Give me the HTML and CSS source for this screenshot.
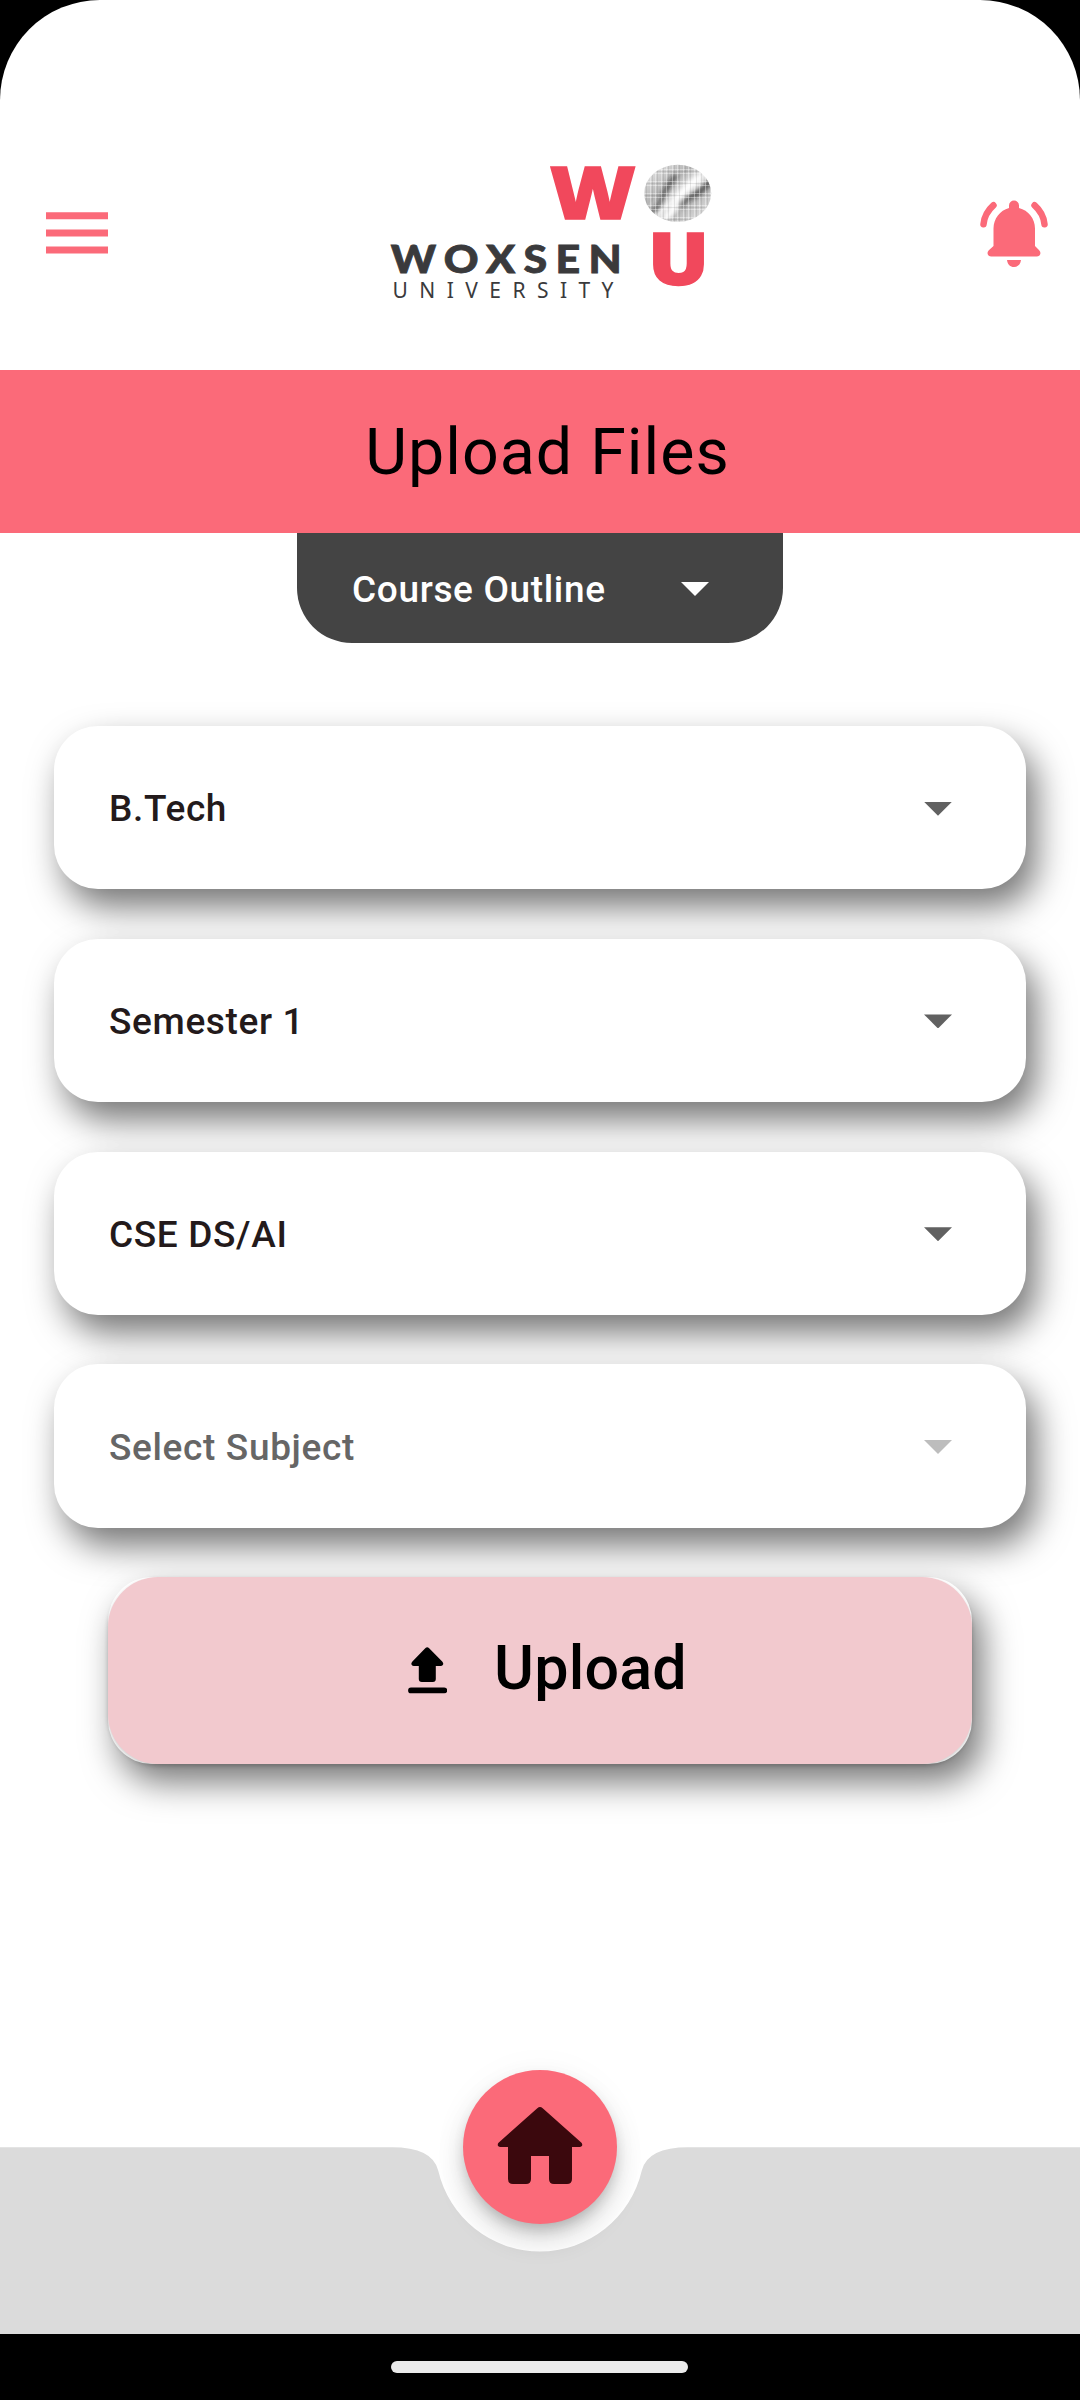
FILE: index.html
```html
<!DOCTYPE html>
<html lang="en">
<head>
<meta charset="utf-8">
<title>Upload Files</title>
<link rel="stylesheet" href="styles.css">
</head>
<body>
<div class="screen">
  <header class="header">
    <svg class="menu" viewBox="0 0 62 42" aria-label="Menu"><path d="M0 .3h62v7H0zM0 17.4h62v7H0zM0 34.5h62v7H0z"/></svg>
    <svg class="logo" viewBox="370 150 360 160" role="img" aria-label="Woxsen University">
      <defs>
        <clipPath id="globe"><ellipse cx="677.7" cy="193.3" rx="33.5" ry="28.5"/></clipPath>
        <linearGradient id="shade" x1="0" y1="0" x2="1" y2="1">
          <stop offset="0" stop-color="#f4f4f4"/><stop offset=".36" stop-color="#b4b4b4"/><stop offset=".52" stop-color="#eee"/><stop offset=".66" stop-color="#bbb"/><stop offset="1" stop-color="#f2f2f2"/>
        </linearGradient>
        <filter id="soft" x="-50%" y="-50%" width="200%" height="200%"><feGaussianBlur stdDeviation="2.2"/></filter>
        <pattern id="weave" width="11" height="12" patternUnits="userSpaceOnUse"><path d="M0 1.500h11M0 5.500h11M1.500 0v12M6.500 0v12" stroke="#fff" stroke-opacity=".5" stroke-width=".8"/><path d="M0 3.500h11M3.500 0v12M8.500 0v12" stroke="#444" stroke-opacity=".16" stroke-width=".8"/></pattern>
      </defs>
      <text class="mark" transform="translate(549.800 218.800) scale(1.186 1)" font-size="72.500" textLength="72.500" lengthAdjust="spacingAndGlyphs">W</text>
      <text class="mark" transform="translate(648 284.500)" font-size="72.500" textLength="61" lengthAdjust="spacingAndGlyphs">U</text>
      <g clip-path="url(#globe)">
        <path fill="url(#shade)" d="M643 164h70v60h-70z"/>
        <g filter="url(#soft)" fill="none" stroke="#222">
          <path d="M650 213c8-4 9-9 13-17s8-15 13-21" stroke-width="5" stroke-opacity=".6"/>
          <path d="M679 207c6-10 13-10 19-14s10-9 14-13" stroke-width="6" stroke-opacity=".65"/>
          <path d="M664 218c8-3 9-10 14-19s12-15 22-22" stroke="#fff" stroke-width="6"/>
        </g>
        <path fill="url(#weave)" d="M643 164h70v60h-70z"/>
      </g>
      <text class="name" transform="translate(390.800 272.600) scale(1.16 1)" textLength="199" lengthAdjust="spacing">WOXSEN</text>
      <text class="sub" x="392.500" y="298" textLength="221" lengthAdjust="spacing">UNIVERSITY</text>
    </svg>
    <svg class="bell" viewBox="980 200 68 68" aria-label="Notifications">
      <path d="M1009 208v-2.500a5 5 0 0 1 10 0v2.500c9.500 2.500 16 10.500 16 20.500v17.500l4.200 4.200c2.500 2.700 1 6.300-2.400 6.300h-45.600c-3.400 0-5-3.600-2.400-6.300l4.700-4.200V228.500c0-10 6.500-18 15.500-20.500zM1007 260h14c-.5 4.500-3.300 7-7 7s-6.500-2.500-7-7z"/>
      <path class="ring" d="M993.500 205.300q-9 8-10 19M1034.500 205.300q9 8 10 19"/>
    </svg>
  </header>

  <h1 class="title">Upload Files</h1>

  <div class="kind"><span>Course Outline</span><i class="caret"></i></div>

  <main class="form">
    <div class="field"><span>B.Tech</span><i class="caret"></i></div>
    <div class="field"><span>Semester 1</span><i class="caret"></i></div>
    <div class="field"><span>CSE DS/AI</span><i class="caret"></i></div>
    <div class="field disabled"><span>Select Subject</span><i class="caret"></i></div>
    <div class="upload-wrap">
      <button class="upload">
        <svg class="upload-icon" viewBox="408 1647 39 47"><path d="M425.500 1648q1.700-1.600 3.400 0l13.300 13.500c2 2.100 1 4.500-1.400 4.500h-5v13q0 3-3 3h-11q-3 0-3-3v-13h-5c-2.400 0-3.400-2.400-1.400-4.500zM411 1687.500h33.300a2.900 2.900 0 0 1 0 5.800H411a2.900 2.900 0 0 1 0-5.800z"/></svg>
        <span>Upload</span>
      </button>
    </div>
  </main>

  <nav class="bottom">
    <svg class="bar" viewBox="0 0 1080 187"><path d="M0 .2H391.500Q432.750.2 438.200 23.600A104.500 104.500 0 0 0 641.800 23.600Q647.250.2 688.500.2H1080V187H0z"/></svg>
    <button class="home" aria-label="Home">
      <svg viewBox="497 2107 86 78"><path d="M537.300 2108.200q2.700-2.300 5.400 0l38.500 34.300c2 1.900 1 4.500-1.500 4.500H572v32q0 5-5 5h-13q-5 0-5-5v-23h-18v23q0 5-5 5h-13q-5 0-5-5v-32h-7.700c-2.500 0-3.500-2.600-1.500-4.500z"/></svg>
    </button>
  </nav>
</div>
<footer class="system"><span class="handle"></span></footer>
</body>
</html>
```
FILE: styles.css
```css
* { box-sizing: border-box; }
body {
  margin: 0;
  width: 1080px;
  height: 2400px;
  overflow: hidden;
  background: #000;
  font-family: Roboto, sans-serif;
  display: flex;
  flex-direction: column;
}
button { border: 0; padding: 0; font: inherit; }
svg { display: block; }

.screen {
  height: 2334px;
  background: #fff;
  border-radius: 100px 100px 0 0;
  overflow: hidden;
  display: flex;
  flex-direction: column;
}

.header {
  height: 370px;
  flex: none;
  padding: 150px 32px 0 46px;
  display: flex;
  justify-content: space-between;
}
.menu { width: 62px; height: 42px; margin-top: 62px; fill: #fb6a79; }
.logo { width: 360px; height: 160px; margin-right: -12px; overflow: visible; }
.bell { width: 68px; height: 68px; margin-top: 50px; fill: #fb6a79; overflow: visible; }
.bell .ring { fill: none; stroke: #fb6a79; stroke-width: 6.500px; stroke-linecap: round; }
.mark { font-family: "Open Sans", sans-serif; font-weight: 800; fill: #f1485c; stroke: #f1485c; stroke-width: 1.500px; }
.name { font-family: Lato, sans-serif; font-weight: 900; font-size: 37px; fill: #3a3a3c; stroke: #3a3a3c; stroke-width: .8px; }
.sub { font-family: "Noto Sans", sans-serif; font-size: 21px; fill: #3a3a3c; }

.title {
  margin: 0;
  height: 163px;
  flex: none;
  background: #fb6a79;
  color: #000;
  font-size: 64.500px;
  font-weight: 400;
  letter-spacing: 1px;
  line-height: 165px;
  text-align: center;
  padding-left: 15px;
}

.kind {
  width: 486px;
  height: 110px;
  flex: none;
  align-self: center;
  padding: 2px 74px 0 55px;
  background: #444;
  color: #fff;
  border-radius: 0 0 55px 55px;
  display: flex;
  align-items: center;
  justify-content: space-between;
  font-size: 37px;
  font-weight: 500;
  letter-spacing: .65px;
}
.caret {
  width: 28px;
  height: 14px;
  background: #616161;
  clip-path: polygon(0 0, 100% 0, 50% 100%);
}
.kind .caret { background: #fff; }

.form {
  padding: 83px 54px 0;
  display: flex;
  flex-direction: column;
  gap: 49.500px;
  flex: 1;
}
.field {
  height: 163.300px;
  flex: none;
  padding: 2px 74px 0 55px;
  border-radius: 44px;
  background: #fff;
  color: #231a1b;
  box-shadow: 10px 18px 35px rgba(0, 0, 0, .54);
  display: flex;
  align-items: center;
  justify-content: space-between;
  font-size: 37px;
  font-weight: 500;
  letter-spacing: .65px;
}
.disabled { color: #666; }
.disabled .caret { background: #bdbdbd; }

.upload-wrap {
  width: 864px;
  height: 187px;
  flex: none;
  align-self: center;
  border-radius: 44px;
  background: #fff;
  box-shadow: 10px 18px 35px rgba(0, 0, 0, .54);
}
.upload {
  width: 100%;
  height: 100%;
  border-radius: 50px;
  background: #f2c9ce;
  box-shadow: 0 2px 4px rgba(0, 0, 0, .2);
  color: #000;
  font-size: 61px;
  font-weight: 500;
  letter-spacing: .2px;
  display: flex;
  align-items: center;
  justify-content: center;
  gap: 47px;
  padding-left: 15px;
}
.upload span { padding-bottom: 5px; }
.upload-icon { width: 39px; height: 47px; }

.bottom { position: relative; height: 187px; flex: none; }
.bar { width: 1080px; height: 187px; fill: #dbdbdb; }
.home {
  position: absolute;
  left: 463px;
  top: -77px;
  width: 154px;
  height: 154px;
  border-radius: 50%;
  background: #fb6a79;
  box-shadow: 0 8px 14px -3px rgba(0, 0, 0, .2), 0 16px 28px rgba(0, 0, 0, .14), 0 3px 40px rgba(0, 0, 0, .04);
  display: flex;
  justify-content: center;
  padding-top: 37px;
}
.home svg { width: 86px; height: 78px; fill: #3b080d; }

.system { height: 66px; display: flex; justify-content: center; padding-top: 27px; }
.handle { width: 297px; height: 12px; border-radius: 6px; background: #ebebeb; margin-right: 1px; }
```
